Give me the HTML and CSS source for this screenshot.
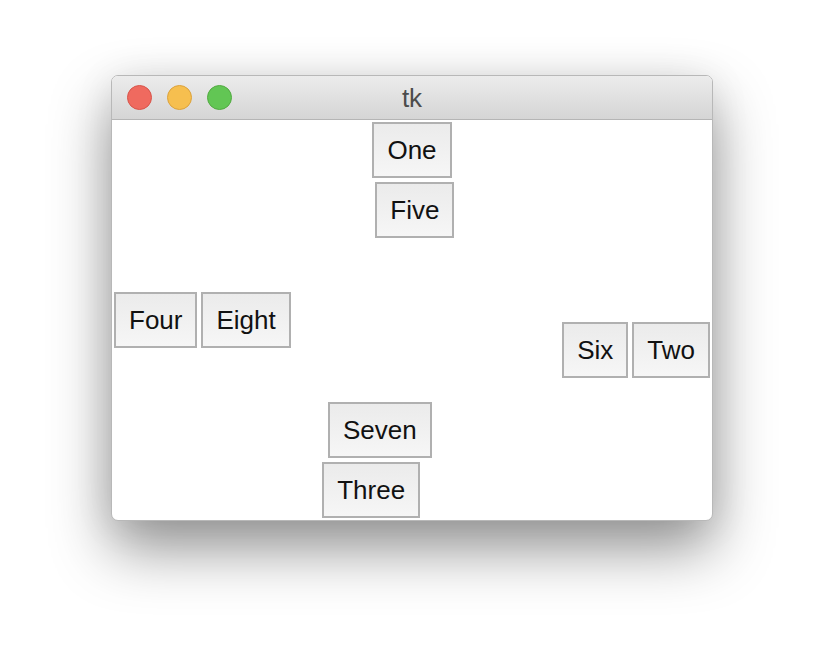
FILE: index.html
```html
<!DOCTYPE html>
<html>
<head>
<meta charset="utf-8">
<link rel="stylesheet" href="styles.css">
</head>
<body>
<div class="desktop">
  <div class="window">
    <div class="titlebar">
      <div class="lights">
        <span class="light red"></span>
        <span class="light yellow"></span>
        <span class="light green"></span>
      </div>
      <div class="title">tk</div>
    </div>
    <div class="content">
      <div class="btn center">One</div>
      <div class="rest">
        <div class="col">
          <div class="row">
            <div class="btn center">Four</div>
            <div class="col">
              <div class="btn center">Five</div>
              <div class="row">
                <div class="col">
                  <div class="row">
                    <div class="btn center">Eight</div>
                  </div>
                  <div class="btn center">Seven</div>
                </div>
                <div class="btn center">Six</div>
              </div>
            </div>
          </div>
          <div class="btn center">Three</div>
        </div>
        <div class="btn center">Two</div>
      </div>
    </div>
  </div>
</div>
</body>
</html>
```

FILE: styles.css
```css
html, body {
  margin: 0;
  padding: 0;
  background: #ffffff;
}

.desktop {
  width: 824px;
  height: 668px;
  padding: 75px 0 0 111px;
  box-sizing: border-box;
}

.window {
  width: 602px;
  border: 1px solid #b8b8b8;
  border-radius: 7px;
  box-sizing: border-box;
  overflow: hidden;
  background: #ffffff;
  box-shadow: 0 28px 60px rgba(0, 0, 0, 0.42), 0 4px 40px rgba(0, 0, 0, 0.08);
}

.titlebar {
  position: relative;
  height: 43px;
  border-bottom: 1px solid #b5b5b5;
  background: linear-gradient(#ececec, #d5d5d5);
  display: flex;
  align-items: center;
}

.lights {
  display: flex;
  gap: 15px;
  padding-left: 15px;
}

.light {
  width: 23px;
  height: 23px;
  border-radius: 50%;
  border: 1px solid;
  display: block;
}

.red {
  background: #ef6a5f;
  border-color: #d8544a;
}

.yellow {
  background: #f6bf4f;
  border-color: #dca23b;
}

.green {
  background: #62c654;
  border-color: #52aa41;
}

.title {
  position: absolute;
  left: 0;
  right: 0;
  top: 0;
  bottom: 0;
  text-align: center;
  line-height: 45px;
  font-family: "Liberation Sans", Arial, sans-serif;
  font-size: 26px;
  color: #4c4c4c;
}

.content {
  width: 600px;
  height: 400px;
  display: flex;
  flex-direction: column;
}

.btn {
  margin: 2px;
  padding: 11px 13px;
  border: 2px solid #b0b0b0;
  background: linear-gradient(#ebebeb, #f6f6f6);
  font-family: "Liberation Sans", Arial, sans-serif;
  font-size: 26px;
  line-height: 30px;
  color: #111111;
  white-space: nowrap;
  flex: none;
}

.center {
  align-self: center;
}

.rest {
  flex: 1;
  display: flex;
  flex-direction: row;
}

.col {
  flex: 1;
  display: flex;
  flex-direction: column;
}

.row {
  flex: 1;
  display: flex;
  flex-direction: row;
}
```
